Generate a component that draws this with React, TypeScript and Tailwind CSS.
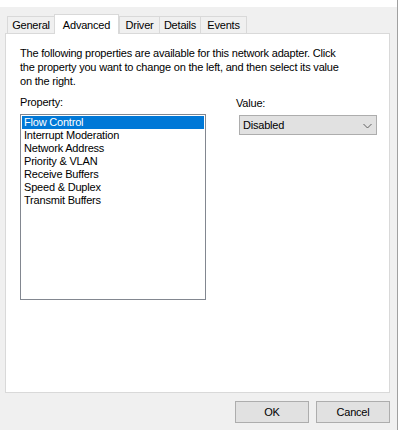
import React from 'react'

const properties = [
  'Flow Control',
  'Interrupt Moderation',
  'Network Address',
  'Priority & VLAN',
  'Receive Buffers',
  'Speed & Duplex',
  'Transmit Buffers',
]

function Tab({ label, selected, className }: { label: string; selected?: boolean; className?: string })
{
  if (selected)
  {
    return (
      <div className={`relative z-10 h-[20px] bg-white border border-b-0 border-[#d9d9d9] flex items-start justify-center pt-[2px] ${className ?? ''}`}>
        {label}
      </div>
    )
  }

  return (
    <div className={`mt-[2px] h-[17px] bg-[#f0f0f0] border border-b-0 border-[#d9d9d9] flex items-center justify-center ${className ?? ''}`}>
      {label}
    </div>
  )
}

export default function App()
{
  const selected = 0

  return (
    <div
      className="w-[398px] h-[430px] bg-[#f0f0f0] flex text-[11px] text-black tracking-[-0.2px]"
      style={{ fontFamily: '"Liberation Sans", Arial, sans-serif' }}
    >
      <div className="w-[397px] flex flex-col">
        <div className="h-[7px] bg-white" />

        <div className="h-[20px] mt-[7px] flex items-start pl-[7px]">
          <Tab label="General" className="w-[48px]" />
          <Tab label="Advanced" selected className="w-[65px] -ml-px" />
          <Tab label="Driver" className="w-[41px]" />
          <Tab label="Details" className="w-[42px] -ml-px" />
          <Tab label="Events" className="w-[47px] -ml-px" />
        </div>

        <div className="-mt-px ml-[5px] w-[385px] h-[360px] bg-white border border-[#d9d9d9] pl-[14px] pt-[12px]">
          <p className="leading-[14px]">
            The following properties are available for this network adapter. Click
            <br />
            the property you want to change on the left, and then select its value
            <br />
            on the right.
          </p>

          <div className="flex mt-[7px]">
            <div className="flex flex-col">
              <div className="leading-[14px] h-[14px]">Property:</div>
              <div className="mt-[5px] w-[186px] h-[186px] border border-[#828790] p-px">
                {properties.map((p, i) => (
                  <div
                    key={p}
                    className={`h-[13px] leading-[13px] pl-[2px] ${i === selected ? 'bg-[#0078d7] text-white' : ''}`}
                  >
                    {p}
                  </div>
                ))}
              </div>
            </div>

            <div className="flex flex-col ml-[30px]">
              <div className="leading-[14px] h-[14px] mt-px">Value:</div>
              <div className="mt-[5px] ml-[3px] w-[138px] h-[20px] bg-[#e1e1e1] border border-[#adadad] flex items-center justify-between pl-[3px] pr-[4px]">
                <span>Disabled</span>
                <svg width="9" height="6" viewBox="0 0 9 6" className="mt-px">
                  <polyline points="0.5,1 4.5,5 8.5,1" fill="none" stroke="#606060" strokeWidth="1" />
                </svg>
              </div>
            </div>
          </div>
        </div>

        <div className="flex justify-end gap-[7px] pt-[8px] pr-[7px]">
          <button className="w-[74px] h-[22px] bg-[#e1e1e1] border border-[#adadad] flex items-center justify-center">
            OK
          </button>
          <button className="w-[74px] h-[22px] bg-[#e1e1e1] border border-[#adadad] flex items-center justify-center">
            Cancel
          </button>
        </div>
      </div>
      <div className="w-px h-full bg-[#a0a0a0]" />
    </div>
  )
}
